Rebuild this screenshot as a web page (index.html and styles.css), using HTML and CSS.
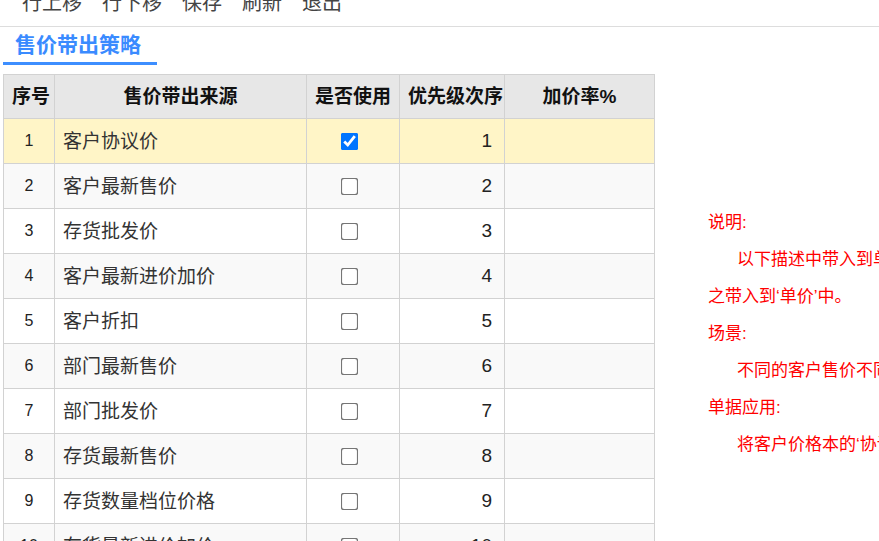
FILE: index.html
```html
<!DOCTYPE html>
<html lang="zh-CN">
<head>
    <meta charset="UTF-8">
    <meta name="viewport" content="width=device-width, initial-scale=1.0">
    <title>售价带出策略</title>
    <link rel="stylesheet" href="styles.css">
</head>
<body>
    <div class="toolbar">
        <span>行上移</span>
        <span>行下移</span>
        <span>保存</span>
        <span>刷新</span>
        <span>退出</span>
    </div>

    <div class="tabs">
        <span class="tab active">售价带出策略</span>
    </div>

    <div class="main">
        <table class="grid">
            <colgroup>
                <col class="c-no">
                <col class="c-name">
                <col class="c-use">
                <col class="c-order">
                <col class="c-rate">
            </colgroup>
            <thead>
                <tr>
                    <th>序号</th>
                    <th>售价带出来源</th>
                    <th>是否使用</th>
                    <th>优先级次序</th>
                    <th>加价率%</th>
                </tr>
            </thead>
            <tbody>
                <tr class="current">
                    <td class="no">1</td><td class="name">客户协议价</td>
                    <td class="use"><input type="checkbox" checked></td><td class="order">1</td><td></td>
                </tr>
                <tr>
                    <td class="no">2</td><td class="name">客户最新售价</td>
                    <td class="use"><input type="checkbox"></td><td class="order">2</td><td></td>
                </tr>
                <tr>
                    <td class="no">3</td><td class="name">存货批发价</td>
                    <td class="use"><input type="checkbox"></td><td class="order">3</td><td></td>
                </tr>
                <tr>
                    <td class="no">4</td><td class="name">客户最新进价加价</td>
                    <td class="use"><input type="checkbox"></td><td class="order">4</td><td></td>
                </tr>
                <tr>
                    <td class="no">5</td><td class="name">客户折扣</td>
                    <td class="use"><input type="checkbox"></td><td class="order">5</td><td></td>
                </tr>
                <tr>
                    <td class="no">6</td><td class="name">部门最新售价</td>
                    <td class="use"><input type="checkbox"></td><td class="order">6</td><td></td>
                </tr>
                <tr>
                    <td class="no">7</td><td class="name">部门批发价</td>
                    <td class="use"><input type="checkbox"></td><td class="order">7</td><td></td>
                </tr>
                <tr>
                    <td class="no">8</td><td class="name">存货最新售价</td>
                    <td class="use"><input type="checkbox"></td><td class="order">8</td><td></td>
                </tr>
                <tr>
                    <td class="no">9</td><td class="name">存货数量档位价格</td>
                    <td class="use"><input type="checkbox"></td><td class="order">9</td><td></td>
                </tr>
                <tr>
                    <td class="no">10</td><td class="name">存货最新进价加价</td>
                    <td class="use"><input type="checkbox"></td><td class="order">10</td><td></td>
                </tr>
                <tr>
                    <td class="no">11</td><td class="name">存货参考售价</td>
                    <td class="use"><input type="checkbox"></td><td class="order">11</td><td></td>
                </tr>
            </tbody>
        </table>

        <div class="note">
            <p>说明:</p>
            <p class="indent">以下描述中带入到单价的价格来源中，取到价格后将之带入到‘单价’中。</p>
            <p>场景:</p>
            <p class="indent">不同的客户售价不同，可设置客户协议价。</p>
            <p>单据应用:</p>
            <p class="indent">将客户价格本的‘协议价’带入单据单价。</p>
        </div>
    </div>
</body>
</html>
```

FILE: styles.css
```css
html, body { overflow: hidden; }
body { margin: 0; font-family: "Liberation Sans", "Noto Sans CJK SC", sans-serif; color: #333; background: #fff; }

.toolbar { display: flex; gap: 20px; margin-top: -10px; padding: 0 0 10px 22px; font-size: 20px; line-height: 26px; color: #444; border-bottom: 1px solid #ddd; }

.tabs { padding-left: 3px; }
.tab { display: inline-block; padding: 0 16px 0 12px; font-size: 21px; line-height: 35px; font-weight: bold; color: #3a8bff; }
.tab.active { border-bottom: 3px solid #3d8eff; }

.main { display: flex; align-items: flex-start; gap: 53px; margin-top: 9px; padding-left: 3px; }

.grid { flex-shrink: 0; width: 651px; table-layout: fixed; border-collapse: collapse; font-size: 19px; }
.c-no { width: 51px; }
.c-name { width: 252px; }
.c-use { width: 93px; }
.c-order { width: 105px; }
.c-rate { width: 150px; }
.grid th, .grid td { border: 1px solid #d2d2d2; padding: 2px 8px; white-space: nowrap; overflow: hidden; }
.grid th { height: 39px; padding: 0 8px 4px; background: #e7e7e7; color: #111; font-weight: bold; text-align: center; }
.grid td { height: 40px; }
.grid tbody tr:nth-child(even) { background: #f9f9f9; }
.grid tbody tr.current { background: #fff5c7; }
.grid .no { text-align: center; font-size: 16px; color: #222; }
.grid .name { padding: 0 8px 4px; color: #333; }
.grid .use { text-align: center; }
.grid .use input { width: 13px; height: 13px; margin: 0 7px 0 0; vertical-align: middle; transform: scale(1.35); }
.grid .order { text-align: right; padding-right: 12px; color: #222; }

.note { flex-shrink: 0; width: 425px; margin-top: 130px; font-size: 17px; line-height: 37px; color: #f00; }
.note p { margin: 0; }
.note .indent { text-indent: 29px; }
```
